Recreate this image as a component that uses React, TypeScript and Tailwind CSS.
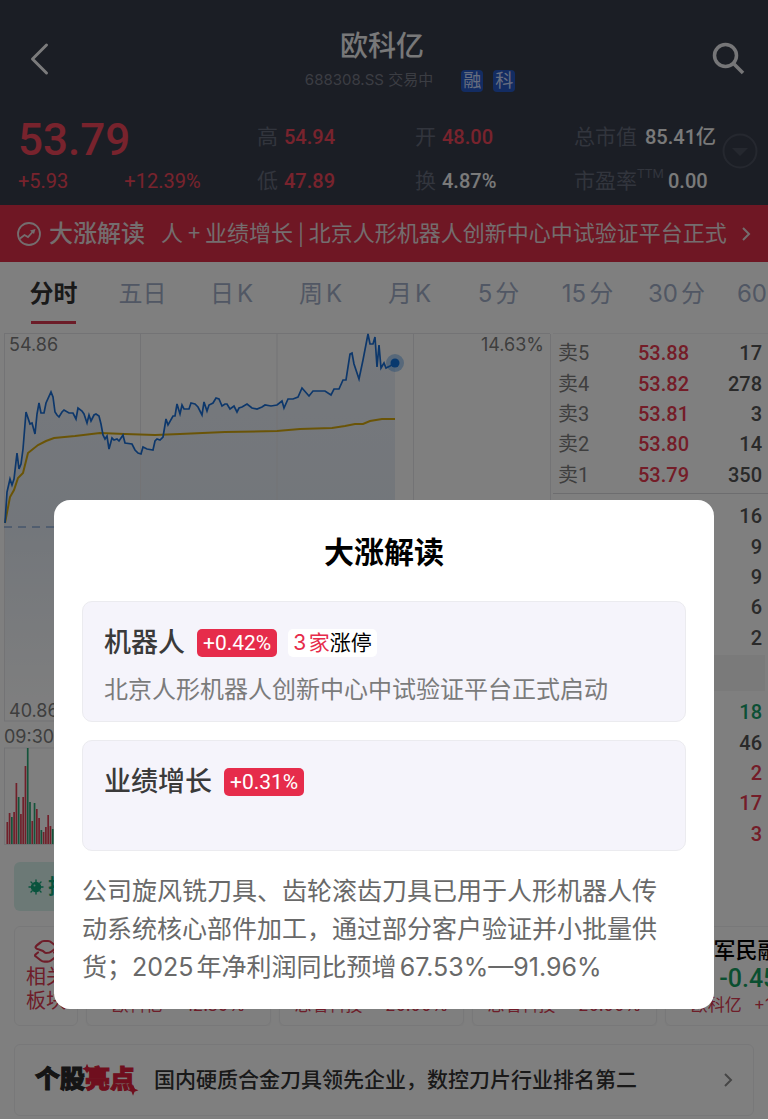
import React from "react";

const SANS = "font-['Inter','Noto_Sans_CJK_SC',sans-serif]";
const DIN = "font-['Roboto','Noto_Sans_CJK_SC',sans-serif]";

const TABS = ["分时", "五日", "日K", "周K", "月K", "5分", "15分", "30分", "60分"];

const SELLS = [
  ["卖5", "53.88", "17"],
  ["卖4", "53.82", "278"],
  ["卖3", "53.81", "3"],
  ["卖2", "53.80", "14"],
  ["卖1", "53.79", "350"],
];
const BUYS = [
  ["买1", "53.78", "16"],
  ["买2", "53.77", "9"],
  ["买3", "53.76", "9"],
  ["买4", "53.75", "6"],
  ["买5", "53.74", "2"],
];
const TRADES = [
  ["14:02", "53.78", "18", "text-[#18a06a]"],
  ["14:02", "53.79", "46", "text-[#555555]"],
  ["14:02", "53.79", "2", "text-[#e93b50]"],
  ["14:02", "53.79", "17", "text-[#e93b50]"],
  ["14:02", "53.79", "3", "text-[#e93b50]"],
];

const PRICE =
  "5,523 7,492 10,479 12,485 14,479 17,453 19,469 21,464 23,449 26,412 30,424 32,423 35,434 37,414 39,403 41,413 44,413 46,403 51,392 53,397 55,412 57,415 59,417 62,412 64,410 69,413 73,413 76,419 78,408 82,411 84,414 87,423 89,415 91,421 94,415 96,414 99,416 101,424 103,435 105,439 107,436 109,449 112,438 114,440 117,439 119,441 123,435 125,443 132,444 135,450 138,453 141,454 143,447 147,449 153,450 155,441 157,439 160,440 163,437 166,419 168,425 173,416 175,416 177,404 180,414 182,405 184,409 189,409 191,403 195,404 198,407 202,415 204,402 207,411 209,405 213,403 216,398 219,399 222,406 225,404 227,404 230,409 234,406 237,412 239,408 242,407 247,404 252,408 257,409 262,407 265,405 271,406 277,405 282,401 284,408 288,399 293,399 298,397 302,388 309,396 313,391 325,391 331,395 334,389 339,389 343,380 346,380 350,354 352,353 354,364 359,379 363,360 368,334 370,344 373,344 375,337 377,367 379,345 381,368 384,363 386,368 390,366 395,363";
const AVERAGE =
  "5,523 10,497 14,490 18,478 23,473 28,453 38,445 46,441 54,438 75,436 100,433 125,434 155,435 180,434 225,432 277,431 300,429 332,428 345,426 355,424 363,424 370,421 382,419 395,419";

const VOLUMES: [number, string][] = [
  [822, "r"], [813, "r"], [817, "g"], [812, "r"], [783, "r"], [797, "g"], [814, "r"], [797, "r"], [766, "r"], [748, "g"],
  [802, "g"], [821, "r"], [803, "g"], [809, "r"], [818, "r"], [830, "g"], [832, "r"], [827, "r"], [815, "r"], [826, "r"], [829, "g"],
];

const SECTORS = [
  ["机器人", "+0.42%", "欧科亿", "+12.39%"],
  ["专精特新", "+0.31%", "思看科技", "+20.00%"],
  ["次新股", "+0.28%", "思看科技", "+20.00%"],
  ["军民融合", "-0.45%", "欧科亿", "+12.39%"],
];

function Chevron({ className }: { className: string }) {
  return (
    <svg viewBox="0 0 10 16" fill="none" stroke="currentColor" strokeWidth="2" className={className} aria-hidden="true">
      <path d="M2 2l6 6-6 6" />
    </svg>
  );
}

function Header() {
  return (
    <header className="h-[205px] bg-[#363c4a] px-[18px] pt-[25px]">
      <div className="flex items-start justify-between">
        <button aria-label="返回" className="mt-[15px] ml-2 w-9">
          <svg viewBox="0 0 36 36" className="size-9" fill="none" stroke="#f6f6f8" strokeWidth="3" strokeLinecap="round" strokeLinejoin="round">
            <path d="M20.500 5L6.500 19L20.500 33" />
          </svg>
        </button>
        <div className="flex flex-col items-center pl-12">
          <h1 className="-ml-14 text-[28px] leading-[42px] font-medium text-[#f0f0f2]">欧科亿</h1>
          <div className="flex h-[27px] items-center text-[15px]">
            <span className="text-[#767b87]">688308.SS 交易中</span>
            <span className="ml-7 size-[22px] rounded bg-[#2659c4] text-center text-lg leading-[22px] text-[#cfdcff]">融</span>
            <span className="ml-2.5 size-[22px] rounded bg-[#2659c4] text-center text-lg leading-[22px] text-[#cfdcff]">科</span>
          </div>
        </div>
        <button aria-label="搜索" className="mt-[15px] mr-1">
          <svg viewBox="0 0 36 36" className="size-9" fill="none" stroke="#ededf0" strokeWidth="3.500">
            <circle cx="15.500" cy="15.500" r="11" />
            <path d="M23.500 23.500L33 33" />
          </svg>
        </button>
      </div>
      <div className="flex items-start pt-[21px]">
        <div className={`grid flex-1 grid-cols-[239fr_158fr_159fr_148fr] text-xl font-medium whitespace-nowrap text-[#f4f4f4] ${DIN}`}>
          <div className="h-[44px] text-[44px] leading-[50px] text-[#f0475a]">53.79</div>
          <Stat label="高" value="54.94" red />
          <Stat label="开" value="48.00" red />
          <Stat label="总市值" value="85.41亿" wide />
          <div className="flex h-[44px] items-center gap-14 font-normal text-[#f0475a]">
            <span>+5.93</span>
            <span>+12.39%</span>
          </div>
          <Stat label="低" value="47.89" red />
          <Stat label="换" value="4.87%" />
          <Stat label="市盈率" sup="TTM" value="0.00" />
        </div>
        <button aria-label="展开" className="mt-[18px] -mr-2">
          <svg viewBox="0 0 36 36" className="size-9" fill="none">
            <circle cx="18" cy="18" r="16.500" stroke="#4b505f" strokeWidth="2" />
            <path d="M10 15h16l-8 8z" fill="#4b505f" />
          </svg>
        </button>
      </div>
    </header>
  );
}

function Stat({ label, value, sup, red, wide }: { label: string; value: string; sup?: string; red?: boolean; wide?: boolean }) {
  return (
    <div className="flex h-[44px] items-center">
      <span className={`text-[21px] font-normal text-[#646a7a] ${SANS}`}>{label}</span>
      {sup && <span className="self-start pt-1.5 text-[13px] font-normal text-[#646a7a]">{sup}</span>}
      <span className={red ? "ml-1.5 text-[#f0475a]" : sup ? "ml-1" : wide ? "ml-2" : "ml-1.5"}>{value}</span>
    </div>
  );
}

function Banner() {
  return (
    <a href="#surge" className="flex h-[57px] items-center bg-[#de2e48] px-4 font-['Noto_Sans_CJK_SC',sans-serif] text-[#e8dadd]">
      <svg viewBox="0 0 26 26" className="size-[26px] shrink-0" fill="none" stroke="currentColor" strokeWidth="1.800">
        <circle cx="13" cy="13" r="11" />
        <path d="M4 17.500l4.500-3.500 3.500 2 5-5.500" />
        <path d="M19.500 8l-5.500 1.500 4 3.500z" fill="currentColor" stroke="none" />
      </svg>
      <span className="ml-[7px] shrink-0 pb-1 text-2xl font-medium">大涨解读</span>
      <span className="ml-4 flex-1 pb-1 text-[22px] whitespace-nowrap">人 + 业绩增长 | 北京人形机器人创新中心中试验证平台正式</span>
      <Chevron className="h-4 w-3 shrink-0" />
    </a>
  );
}

function Tabs() {
  return (
    <nav className="flex h-[71px] overflow-hidden pl-[9px] [text-autospace:normal]">
      {TABS.map((t, i) => (
        <button
          key={t}
          className={
            i === 0
              ? "flex h-[62px] w-[89px] shrink-0 flex-col items-center justify-between pt-[14px] text-2xl leading-9 font-bold text-[#333333]"
              : "flex h-[62px] w-[89px] shrink-0 flex-col items-center pt-[14px] text-2xl leading-9 text-[#a3afc8]"
          }
        >
          {t}
          {i === 0 && <span className="h-[3px] w-[45px] bg-[#d93850]" />}
        </button>
      ))}
    </nav>
  );
}

function Chart() {
  return (
    <div className="relative h-[520px] flex-1 text-lg leading-6 text-[#7d7d7d]">
      <svg viewBox="0 333 553 520" preserveAspectRatio="none" className="h-full w-full" fill="none">
        <defs>
          <linearGradient id="area" x1="0" y1="333" x2="0" y2="721" gradientUnits="userSpaceOnUse">
            <stop offset="0" stopColor="#edf2fa" />
            <stop offset="0.500" stopColor="#e6edf6" />
            <stop offset="1" stopColor="#ffffff" />
          </linearGradient>
        </defs>
        <polygon points={`4,721 ${PRICE} 395,721`} fill="url(#area)" />
        <path d="M4.500 334V721M140.500 334V721M277 334V721M413.500 334V721M550.500 334V721M4 333.500H550M4 721H550M4.500 748V844M550.500 748V844M4 748H550M4 844.500H550" stroke="#e6e6ea" />
        <path d="M4 527H550" stroke="#5f8ac8" strokeDasharray="8 6" />
        <polyline points={AVERAGE} stroke="#d4a90f" strokeWidth="2" />
        <polyline points={PRICE} stroke="#1a6fd6" strokeWidth="1.700" />
        <circle cx="395" cy="363" r="9" fill="#1a7ce0" opacity="0.350" />
        <circle cx="395" cy="363" r="4.500" fill="#1272dc" />
        {VOLUMES.map(([top, kind], i) => (
          <path key={i} d={`M${7.3 + i * 2.27} 844V${top}`} stroke={kind === "r" ? "#e04055" : "#2aa876"} strokeWidth="1.700" />
        ))}
      </svg>
      <span className="absolute top-0 left-[9px]">54.86</span>
      <span className="absolute top-0 right-[9px]">14.63%</span>
      <span className="absolute top-[366px] left-[9px]">40.86</span>
      <span className="absolute top-[392px] left-1">09:30</span>
    </div>
  );
}

function Quotes({ rows }: { rows: string[][] }) {
  return (
    <table className={`block w-full text-xl font-medium ${DIN}`}>
      <tbody className="grid h-[152px] grid-rows-5">
        {rows.map(([label, price, count, color], i) => (
          <tr key={i} className="flex items-center pr-1.5 pl-[5px]">
            <td className="w-20 font-normal text-[#7c7c7c]">{label}</td>
            <td className="text-[#e93b50]">{price}</td>
            <td className={`ml-auto ${color ?? "text-[#555555]"}`}>{count}</td>
          </tr>
        ))}
      </tbody>
    </table>
  );
}

function OrderBook() {
  return (
    <div className="w-[215px] border-t border-[#f2f2f4] pt-1">
      <Quotes rows={SELLS} />
      <div className="mt-[3px] mb-[7px] border-t border-[#dadade]" />
      <Quotes rows={BUYS} />
      <div className="mt-0.5 mr-[3px] mb-1.5 h-9 bg-[#f4f4f5]" />
      <Quotes rows={TRADES} />
    </div>
  );
}

function Sectors() {
  return (
    <section className="mt-[15px] flex h-[100px] gap-2 overflow-hidden pl-3.5">
      <div className="flex w-16 shrink-0 flex-col items-center rounded-md border border-[#f0f0f2] pt-3 text-xl leading-6 text-[#dc3b52]">
        <svg viewBox="0 0 26 26" className="size-[26px] shrink-0" fill="none" stroke="currentColor" strokeWidth="2.200" strokeLinejoin="round" strokeLinecap="round">
          <path d="M7.500 3.500Q9 2 11 2H15Q17 2 18.500 3.500L23 7Q24 8 23 9L18.500 12.500Q17 14 13 14Q12 14 10 12L6 10.500Q3 10 2.500 8.500Q2 7.500 7.500 3.500Z" />
          <path d="M5 13.500L2.500 15.500Q1.500 16.500 2.800 17.500L8 21.500Q9.500 22.700 11.500 22.700H14.500Q16.500 22.700 18 21.500L23.200 17.500Q24.500 16.500 23.500 15.500L21 13.500" />
        </svg>
        <span className="h-6">相关</span>
        <span>板块</span>
      </div>
      {SECTORS.map(([name, pct, stock, gain], i) => (
        <a key={i} href="#sector" className="w-[185px] shrink-0 rounded-md border border-[#f0f0f2] pt-2 text-center whitespace-nowrap shadow-xs">
          <div className="text-[22px] leading-[30px] font-medium text-black">{name}</div>
          <div className={pct[0] === "-" ? `text-[25px] leading-7 font-medium text-[#159e61] ${DIN}` : `text-[25px] leading-7 font-medium text-[#e93b50] ${DIN}`}>{pct}</div>
          <div className="text-[17px] leading-6 text-[#dc3b52]">
            {stock}
            <span className="ml-3">{gain}</span>
          </div>
        </a>
      ))}
    </section>
  );
}

function Highlight() {
  return (
    <a href="#highlight" className="mx-3.5 mt-[18px] flex h-[72px] items-center rounded-md border border-[#f0f0f2] px-5 text-[21px] font-medium text-[#333333]">
      <span className="relative flex text-[25px] font-black text-[#2a2a2a] [font-style:oblique_6deg] [-webkit-text-stroke:1px_currentColor]">
        个股<span className="text-[#de1f3c]">亮点</span>
        <svg viewBox="0 0 100 36" className="absolute inset-0 h-full w-full overflow-visible" fill="#de1f3c">
          <path d="M52 2l1.500 3.500 3.500 1.500-3.500 1.500-1.500 3.500-1.500-3.500-3.500-1.500 3.500-1.500z" />
          <path d="M98 23l1.500 4 4 1.500-4 1.500-1.500 4-1.500-4-4-1.500 4-1.500z" />
        </svg>
      </span>
      <span className="ml-[19px] flex-1">国内硬质合金刀具领先企业，数控刀片行业排名第二</span>
      <Chevron className="h-4 w-2.5 text-[#8c8c8c]" />
    </a>
  );
}

function ReasonCard({ name, pct, children, tag }: { name: string; pct: string; tag?: React.ReactNode; children?: React.ReactNode }) {
  return (
    <div className="rounded-[10px] border border-[#ebebef] bg-[#f5f4fb] px-[21px] pt-[23px]">
      <div className="flex h-9 items-center">
        <h3 className="text-[27px] leading-9 font-medium text-[#3a3a3a]">{name}</h3>
        <span className={`ml-3 rounded-[5px] bg-[#e62c4b] px-1.5 text-[21px] leading-7 text-white ${DIN}`}>{pct}</span>
        {tag}
      </div>
      {children}
    </div>
  );
}

function Modal() {
  return (
    <div className="absolute inset-0 flex items-end justify-center bg-black/50 px-[54px] pb-[110px]">
      <div role="dialog" aria-modal="true" aria-labelledby="surge-title" className="w-full max-w-[660px] rounded-2xl bg-white px-7 pt-[31px] pb-[23px]">
        <h2 id="surge-title" className="text-center text-[30px] leading-[42px] font-bold text-black">大涨解读</h2>
        <div className="mt-7 flex flex-col gap-[18px]">
          <ReasonCard
            name="机器人"
            pct="+0.42%"
            tag={
              <span className="ml-[11px] rounded-[5px] bg-white px-[5px] text-[21px] leading-7 text-black [text-autospace:normal]">
                <span className="text-[#e62c4b]">3家</span>涨停
              </span>
            }
          >
            <p className="mt-[11px] h-[49px] text-2xl leading-9 text-[#7b7b7b]">北京人形机器人创新中心中试验证平台正式启动</p>
          </ReasonCard>
          <ReasonCard name="业绩增长" pct="+0.31%">
            <div className="h-[50px]" />
          </ReasonCard>
        </div>
        <p className="mt-[21px] pr-4 text-[25px] leading-[38px] text-[#696969] [text-autospace:normal]">
          公司旋风铣刀具、齿轮滚齿刀具已用于人形机器人传动系统核心部件加工，通过部分客户验证并小批量供货；2025年净利润同比预增67.53%—91.96%
        </p>
      </div>
    </div>
  );
}

export default function App() {
  return (
    <div className={`relative overflow-hidden bg-white ${SANS}`} lang="zh-CN">
      <Header />
      <Banner />
      <Tabs />
      <main>
        <section className="flex">
          <Chart />
          <OrderBook />
        </section>
        <div className="mt-[9px] mr-[68px] ml-3.5 flex h-[49px] items-center rounded-md bg-[#d8f3ec] pl-3.5 text-xl font-bold text-[#12a67b]">
          <svg viewBox="0 0 16 16" className="size-4" fill="currentColor" stroke="currentColor" strokeWidth="1.400" strokeLinecap="round">
            <circle cx="8" cy="8" r="4.500" />
            <path d="M8 1v2M8 13v2M1 8h2M13 8h2M3 3l1 1M12 12l1 1M3 13l1-1M12 4l1-1" />
            <circle cx="6.500" cy="6.500" r="1" fill="#a8e6d3" stroke="none" />
          </svg>
          <span className="ml-1">技术分析</span>
        </div>
        <Sectors />
        <Highlight />
      </main>
      <div className="h-[3px]" />
      <Modal />
    </div>
  );
}
